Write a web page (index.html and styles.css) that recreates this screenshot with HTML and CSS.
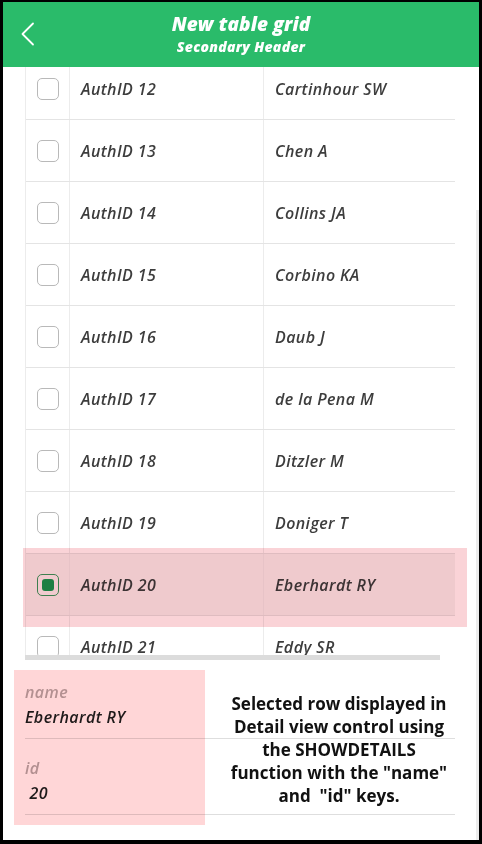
FILE: index.html
```html
<!DOCTYPE html>
<html lang="en">
<head>
<meta charset="utf-8">
<title>New table grid</title>
<link rel="stylesheet" href="styles.css">
</head>
<body>
<div class="frame">
  <header class="header">
    <svg class="back" width="16" height="24" viewBox="0 0 16 24"><path d="M13 1.5 L2.5 12 L13 22.5" fill="none" stroke="#fff" stroke-width="1.8" stroke-linecap="round" stroke-linejoin="round"/></svg>
    <div class="titles">
      <div class="title">New table grid</div>
      <div class="subtitle">Secondary Header</div>
    </div>
  </header>

  <div class="viewport">
    <div class="grid">
      <div class="row"><div class="c0"><span class="box"></span></div><div class="c1">AuthID 12</div><div class="c2">Cartinhour SW</div></div>
      <div class="row"><div class="c0"><span class="box"></span></div><div class="c1">AuthID 13</div><div class="c2">Chen A</div></div>
      <div class="row"><div class="c0"><span class="box"></span></div><div class="c1">AuthID 14</div><div class="c2">Collins JA</div></div>
      <div class="row"><div class="c0"><span class="box"></span></div><div class="c1">AuthID 15</div><div class="c2">Corbino KA</div></div>
      <div class="row"><div class="c0"><span class="box"></span></div><div class="c1">AuthID 16</div><div class="c2">Daub J</div></div>
      <div class="row"><div class="c0"><span class="box"></span></div><div class="c1">AuthID 17</div><div class="c2">de la Pena M</div></div>
      <div class="row"><div class="c0"><span class="box"></span></div><div class="c1">AuthID 18</div><div class="c2">Ditzler M</div></div>
      <div class="row"><div class="c0"><span class="box"></span></div><div class="c1">AuthID 19</div><div class="c2">Doniger T</div></div>
      <div class="row selected"><div class="c0"><span class="box checked"></span></div><div class="c1">AuthID 20</div><div class="c2">Eberhardt RY</div></div>
      <div class="row"><div class="c0"><span class="box"></span></div><div class="c1">AuthID 21</div><div class="c2">Eddy SR</div></div>
    </div>
  </div>
  <div class="hscroll"></div>

  <section class="details">
    <div class="field">
      <div class="label">name</div>
      <div class="value">Eberhardt RY</div>
    </div>
    <div class="field">
      <div class="label">id</div>
      <div class="value">&nbsp;20</div>
    </div>
  </section>

  <div class="hl hl-row"></div>
  <div class="hl hl-detail"></div>
  <p class="note">Selected row displayed in<br>Detail view control using<br>the SHOWDETAILS<br>function with the "name"<br>and &nbsp;"id" keys.</p>
  <div class="vscroll"></div>
</div>
</body>
</html>
```

FILE: styles.css
```css
* { box-sizing: border-box; }
html, body { margin: 0; padding: 0; }
body {
  background: #000;
  width: 482px;
  height: 844px;
  overflow: hidden;
  font-family: "Open Sans", "Liberation Sans", sans-serif;
}
.frame {
  position: relative;
  margin: 2px 3px 0 3px;
  width: 476px;
  height: 838px;
  background: #fff;
  overflow: hidden;
  display: flex;
  flex-direction: column;
}
.header {
  position: relative;
  height: 65px;
  flex: none;
  background: #2abb6a;
  display: flex;
  align-items: center;
  justify-content: center;
}
.back {
  position: absolute;
  left: 17px;
  top: 20px;
}
.titles {
  text-align: center;
  color: #fff;
  font-style: italic;
  font-weight: 800;
  margin-top: -3px;
}
.title {
  font-size: 19px;
  line-height: 26px;
  letter-spacing: 0.1px;
}
.subtitle {
  font-size: 14px;
  line-height: 19px;
  letter-spacing: 0.3px;
}
.viewport {
  height: 588px;
  flex: none;
  overflow: hidden;
}
.grid {
  margin: -9px 0 0 22px;
  width: 430px;
  border-left: 1px solid #ececec;
}
.row {
  display: flex;
  height: 62px;
  border-bottom: 1px solid #e4e4e4;
  color: #3d3d3d;
  font-style: italic;
  font-weight: 600;
  font-size: 16px;
  letter-spacing: 0.4px;
}
.row.selected { background: #f4f4f4; }
.c0, .c1, .c2 {
  display: flex;
  align-items: center;
}
.c0 {
  width: 44px;
  justify-content: center;
  border-right: 1px solid #ececec;
}
.c1 {
  width: 194px;
  padding-left: 11px;
  border-right: 1px solid #ececec;
}
.c2 {
  flex: 1;
  padding-left: 11px;
}
.box {
  width: 22px;
  height: 22px;
  border: 1px solid #b9b9b9;
  border-radius: 5px;
  background: #fff;
  display: flex;
  align-items: center;
  justify-content: center;
}
.box.checked {
  border-color: #3f9a5e;
  background: #f6f6f6;
}
.box.checked::after {
  content: "";
  width: 12px;
  height: 12px;
  border-radius: 3px;
  background: #1d9a4f;
}
.hscroll {
  flex: none;
  margin-left: 22px;
  width: 415px;
  height: 5px;
  background: #dcdcdc;
}
.details {
  margin: 3px 0 0 22px;
  width: 430px;
  font-style: italic;
  font-size: 16px;
  font-weight: 600;
  letter-spacing: 0.4px;
}
.field {
  padding: 18px 0 10px;
  border-bottom: 1px solid #dedede;
}
.label {
  line-height: 22px;
  color: #b3acac;
}
.value {
  margin-top: 3px;
  line-height: 22px;
  color: #1e1e1e;
}
.hl {
  position: absolute;
  background: #fad3d7;
  mix-blend-mode: multiply;
  pointer-events: none;
}
.hl-row { left: 20px; top: 546px; width: 444px; height: 79px; }
.hl-detail { left: 11px; top: 668px; width: 191px; height: 155px; background: #ffd6d7; }
.note {
  position: absolute;
  left: 211px;
  top: 690px;
  width: 250px;
  margin: 0;
  text-align: center;
  font-family: "Open Sans", "Liberation Sans", sans-serif;
  font-weight: 700;
  font-size: 17px;
  line-height: 23px;
  color: #111;
}
.vscroll {
  position: absolute;
  right: 0;
  top: 208px;
  width: 3px;
  bottom: 0;
  background: #ececec;
}
```
